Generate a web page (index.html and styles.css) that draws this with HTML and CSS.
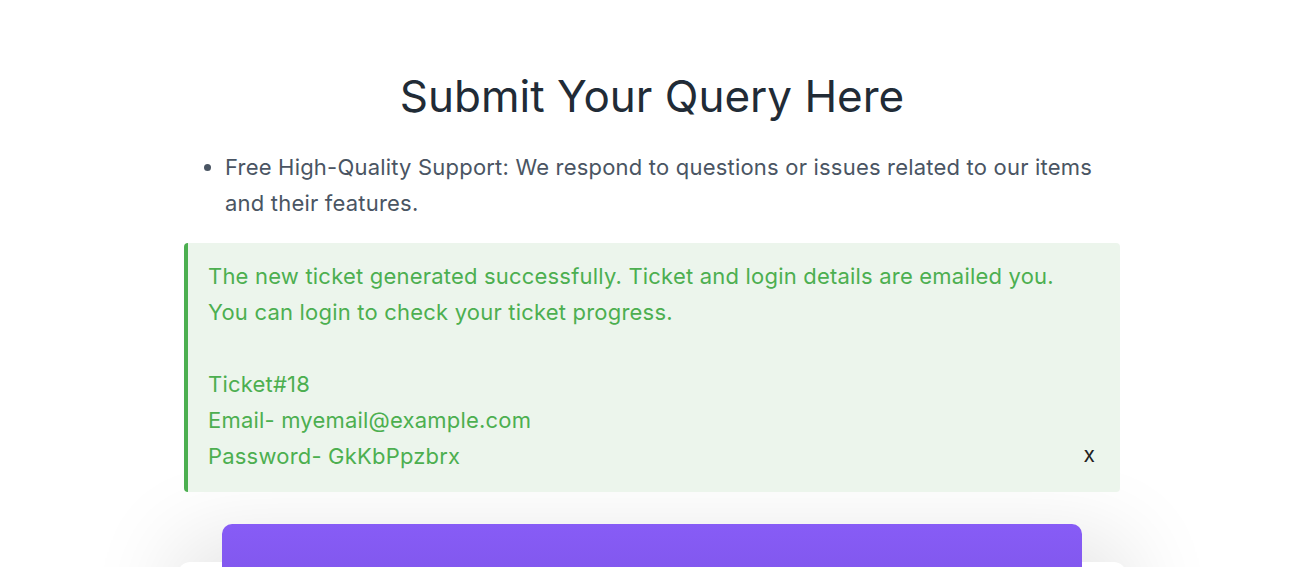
FILE: index.html
```html
<!DOCTYPE html>
<html lang="en">
<head>
<meta charset="utf-8">
<title>Submit Your Query Here</title>
<link rel="stylesheet" href="styles.css">
</head>
<body>
<div class="page">
  <div class="container">
    <h1 class="title">Submit Your Query Here</h1>
    <ul class="notes">
      <li>Free High-Quality Support: We respond to questions or issues related to our items and their features.</li>
    </ul>
    <div class="alert">
      <p>The new ticket generated successfully. Ticket and login details are emailed you.<br>You can login to check your ticket progress.</p>
      <p class="blank">&nbsp;</p>
      <p>Ticket#18<br>Email- myemail@example.com<br>Password- GkKbPpzbrx</p>
      <span class="close">x</span>
    </div>
  </div>
  <div class="card">
    <div class="card-head"></div>
  </div>
</div>
</body>
</html>
```
FILE: styles.css
```css
html, body {
  margin: 0;
  padding: 0;
  background: #ffffff;
  font-family: "Inter", "Noto Sans", sans-serif;
  overflow: hidden;
}
.page {
  padding-left: 10px;
  padding-top: 63px;
}
.container {
  position: relative;
  z-index: 1;
  width: 936px;
  margin: 0 auto;
}
.title {
  margin: 0;
  text-align: center;
  font-size: 44px;
  font-weight: 400;
  line-height: 66px;
  color: #212b36;
}
.notes {
  margin: 20px 0 22px;
  padding-left: 41px;
  color: #4a5563;
  font-size: 22px;
  letter-spacing: 0.2px;
  line-height: 36px;
}
.alert {
  position: relative;
  background: #ecf5ec;
  border-left: 4px solid #4caf50;
  border-radius: 4px;
  padding: 15px 20px 18px;
  color: #4caf50;
  font-size: 22px;
  letter-spacing: 0.2px;
  line-height: 36px;
}
.alert p {
  margin: 0;
}
.close {
  position: absolute;
  right: 25px;
  bottom: 25px;
  color: #222;
  font-size: 21px;
  line-height: 24px;
  letter-spacing: 0;
}
.card {
  position: relative;
  width: 948px;
  height: 200px;
  margin: 70px auto 0;
  background: #ffffff;
  border-radius: 12px;
  box-shadow: 0 -20px 90px rgba(0, 0, 0, 0.12);
}
.card-head {
  position: absolute;
  left: 44px;
  right: 44px;
  top: -38px;
  height: 120px;
  border-radius: 10px;
  background: linear-gradient(180deg, #875cf6 0%, #7a51e2 100%);
}
```
